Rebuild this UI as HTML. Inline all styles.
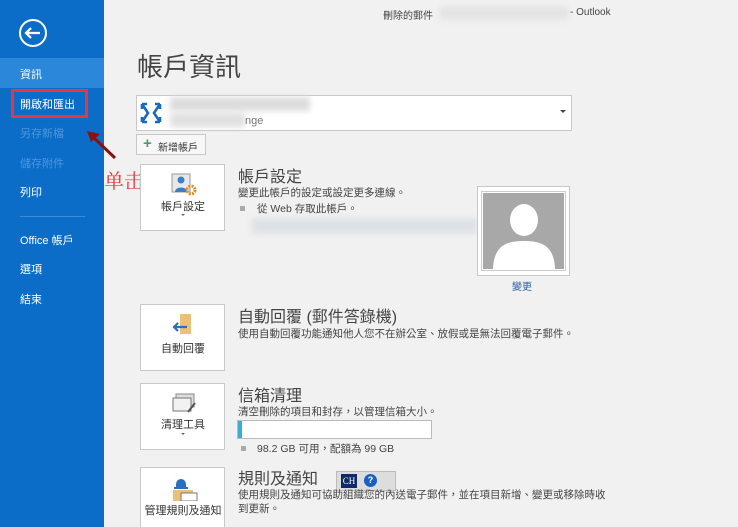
<!DOCTYPE html>
<html><head><meta charset="utf-8"><style>
*{margin:0;padding:0;box-sizing:border-box}
html,body{width:738px;height:527px;overflow:hidden}
body{background:#f1f1f1;font-family:"Liberation Sans","Noto Sans CJK TC",sans-serif;position:relative;color:#444}
.a{position:absolute;white-space:nowrap}
#side{position:absolute;left:0;top:0;width:104px;height:527px;background:#0c6dc9}
.si{position:absolute;left:20px;font-size:11px;color:#fff}
.box{position:absolute;background:#fff;border:1px solid #c8c8c8}
.h{font-size:16px;color:#444}
.d{font-size:10.5px;color:#444}
.bl{font-size:11px;color:#333;text-align:center;width:84px;left:0}
</style></head><body>
<div id="side">
 <svg class="a" style="left:18px;top:18px" width="30" height="30" viewBox="0 0 30 30"><circle cx="15" cy="15" r="13" fill="none" stroke="#fff" stroke-width="2"/><path d="M8 15h14M13 10l-5 5 5 5" fill="none" stroke="#fff" stroke-width="2.2"/></svg>
 <div class="a" style="left:0;top:58px;width:104px;height:30px;background:#2b87d9"></div>
 <div class="si" style="top:66px">資訊</div>
 <div class="si" style="top:96px">開啟和匯出</div>
 <div class="si" style="top:125px;color:#4d97db">另存新檔</div>
 <div class="si" style="top:155px;color:#4d97db">儲存附件</div>
 <div class="si" style="top:184px">列印</div>
 <div class="a" style="left:20px;top:216px;width:65px;height:1px;background:#3b8bd6"></div>
 <div class="si" style="top:232px">Office 帳戶</div>
 <div class="si" style="top:261px">選項</div>
 <div class="si" style="top:291px">結束</div>
</div>
<div class="a" style="left:11px;top:89px;width:77px;height:29px;border:3px solid #e8363c"></div>
<svg class="a" style="left:84px;top:128px" width="36" height="36"><path d="M31 30L8 8" stroke="#8b1010" stroke-width="3"/><path d="M3 3l13 3-9 8z" fill="#8b1010"/></svg>
<div class="a" style="left:104px;top:165px;font-size:20px;color:#e8363c;font-family:'Noto Serif CJK SC',serif">单击</div>

<div class="a" style="left:383px;top:7px;font-size:10px;color:#444">刪除的郵件</div>
<div class="a" style="left:440px;top:6px;width:128px;height:14px;background:#e4e4e4;filter:blur(3px)"></div>
<div class="a" style="left:570px;top:7px;font-size:10px;color:#444">- Outlook</div>
<div class="a" style="left:137px;top:47px;font-size:26px;color:#444">帳戶資訊</div>

<div class="box" style="left:136px;top:95px;width:436px;height:36px"></div>
<svg class="a" style="left:139px;top:101px" width="24" height="24" viewBox="0 0 24 24"><g fill="none" stroke="#1a6bbd" stroke-width="2.6"><path d="M3 3h5M3 3v5M21 3h-5M21 3v5M3 21h5M3 21v-5M21 21h-5M21 21v-5"/><path d="M3 3l6 9-6 9M21 3l-6 9 6 9"/></g></svg>
<div class="a" style="left:170px;top:97px;width:140px;height:14px;background:#dcdcdc;filter:blur(3px)"></div>
<div class="a" style="left:170px;top:113px;width:75px;height:14px;background:#e0e0e0;filter:blur(3px)"></div>
<div class="a" style="left:245px;top:115px;font-size:11px;color:#777">nge</div>
<div class="a" style="left:560px;top:110px;width:0;height:0;border:3px solid transparent;border-top:3px solid #444"></div>
<div class="box" style="left:136px;top:134px;width:70px;height:21px;background:#f7f7f7"></div>
<div class="a" style="left:143px;top:135px;font-size:15px;color:#4f9a6a;font-weight:bold">+</div>
<div class="a" style="left:158px;top:139px;font-size:10px;color:#333">新增帳戶</div>

<div class="box" style="left:140px;top:164px;width:85px;height:67px">
 <svg class="a" style="left:30px;top:8px" width="26" height="24"><rect x="1" y="1" width="18" height="18" fill="#e8e8e8" stroke="#999"/><circle cx="10" cy="7" r="3.5" fill="#3b7fc4"/><path d="M4 19c0-6 12-6 12 0z" fill="#3b7fc4"/><circle cx="20" cy="17" r="4" fill="none" stroke="#e68a22" stroke-width="3" stroke-dasharray="2 1.2"/></svg>
 <div class="a bl" style="top:33px">帳戶設定</div>
 <div class="a" style="left:40px;top:49px;border:2px solid transparent;border-top:2px solid #666"></div>
</div>
<div class="a h" style="left:238px;top:163px">帳戶設定</div>
<div class="a d" style="left:238px;top:185px">變更此帳戶的設定或設定更多連線。</div>
<div class="a" style="left:240px;top:206px;width:5px;height:5px;background:#aaa"></div>
<div class="a d" style="left:257px;top:201px">從 Web 存取此帳戶。</div>
<div class="a" style="left:252px;top:218px;width:225px;height:16px;background:#dde1e6;filter:blur(3px)"></div>
<div class="box" style="left:477px;top:186px;width:93px;height:90px"></div>
<div class="a" style="left:482px;top:192px;width:83px;height:78px;background:#a8a8a8;border:1px solid #fff;outline:1px solid #ccc;overflow:hidden">
 <svg width="83" height="78"><ellipse cx="41" cy="27" rx="14" ry="16" fill="#fff"/><path d="M10 78c0-26 14-30 31-30s31 4 31 30z" fill="#fff"/></svg></div>
<div class="a" style="left:512px;top:278px;font-size:10px;color:#2a5fa8">變更</div>

<div class="box" style="left:140px;top:304px;width:85px;height:67px">
 <svg class="a" style="left:30px;top:8px" width="26" height="24"><rect x="9" y="1" width="11" height="20" fill="#ebc077"/><path d="M16 14H3M7 10l-4 4 4 4" fill="none" stroke="#2b6fbf" stroke-width="2.2"/></svg>
 <div class="a bl" style="top:35px">自動回覆</div>
</div>
<div class="a h" style="left:238px;top:303px">自動回覆 (郵件答錄機)</div>
<div class="a d" style="left:238px;top:326px">使用自動回覆功能通知他人您不在辦公室、放假或是無法回覆電子郵件。</div>

<div class="box" style="left:140px;top:383px;width:85px;height:67px">
 <svg class="a" style="left:30px;top:8px" width="26" height="24"><rect x="5" y="2" width="18" height="13" fill="#ddd" stroke="#888"/><rect x="2" y="6" width="18" height="13" fill="#f2f2f2" stroke="#777"/><path d="M17 20l7-9" stroke="#555" stroke-width="2"/></svg>
 <div class="a bl" style="top:32px">清理工具</div>
 <div class="a" style="left:40px;top:49px;border:2px solid transparent;border-top:2px solid #666"></div>
</div>
<div class="a h" style="left:238px;top:382px">信箱清理</div>
<div class="a d" style="left:238px;top:404px">清空刪除的項目和封存，以管理信箱大小。</div>
<div class="a" style="left:237px;top:420px;width:195px;height:19px;background:#fff;border:1px solid #bbb"></div>
<div class="a" style="left:238px;top:421px;width:4px;height:17px;background:#3aaed0"></div>
<div class="a" style="left:241px;top:446px;width:5px;height:5px;background:#aaa"></div>
<div class="a d" style="left:257px;top:441px">98.2 GB 可用，配額為 99 GB</div>

<div class="box" style="left:140px;top:467px;width:85px;height:70px">
 <svg class="a" style="left:30px;top:7px" width="28" height="26"><path d="M5 9a5 5 0 0 1 10 0v3H5z" fill="#2b6fbf"/><rect x="3" y="12" width="14" height="2" fill="#2b6fbf"/><rect x="2" y="15" width="20" height="11" fill="#ebc077"/><rect x="10" y="18" width="16" height="8" fill="#fff" stroke="#777"/></svg>
 <div class="a bl" style="top:34px">管理規則及通知</div>
</div>
<div class="a h" style="left:238px;top:465px">規則及通知</div>
<div class="a" style="left:336px;top:471px;width:60px;height:20px;background:#ddd;border:1px solid #bbb"></div>
<div class="a" style="left:341px;top:474px;width:16px;height:14px;background:#0f2a6b;color:#fff;font-size:9px;font-family:'Liberation Serif',serif;text-align:center;line-height:14px">CH</div>
<div class="a" style="left:364px;top:474px;width:13px;height:13px;border-radius:50%;background:#1a5fc4;color:#fff;font-size:9px;text-align:center;line-height:13px;font-weight:bold">?</div>
<div class="a d" style="left:238px;top:487px">使用規則及通知可協助組織您的內送電子郵件，並在項目新增、變更或移除時收</div>
<div class="a d" style="left:238px;top:501px">到更新。</div>
</body></html>
